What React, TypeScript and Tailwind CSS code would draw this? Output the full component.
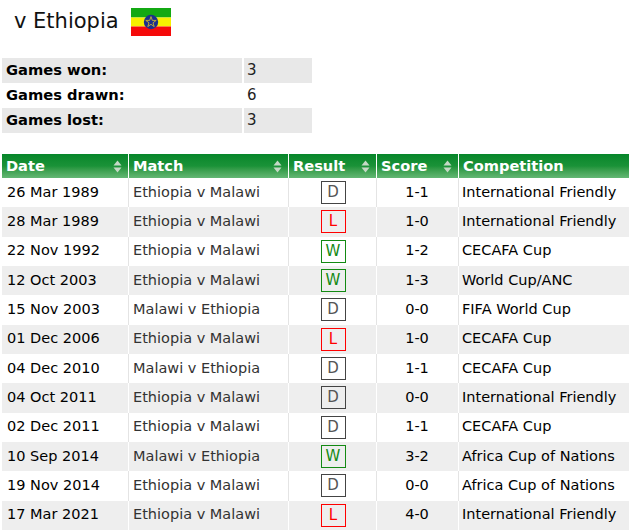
import React from "react";

type Row = { date: string; match: string; res: "W" | "D" | "L"; score: string; comp: string };

const rows: Row[] = [
  { date: "26 Mar 1989", match: "Ethiopia v Malawi", res: "D", score: "1-1", comp: "International Friendly" },
  { date: "28 Mar 1989", match: "Ethiopia v Malawi", res: "L", score: "1-0", comp: "International Friendly" },
  { date: "22 Nov 1992", match: "Ethiopia v Malawi", res: "W", score: "1-2", comp: "CECAFA Cup" },
  { date: "12 Oct 2003", match: "Ethiopia v Malawi", res: "W", score: "1-3", comp: "World Cup/ANC" },
  { date: "15 Nov 2003", match: "Malawi v Ethiopia", res: "D", score: "0-0", comp: "FIFA World Cup" },
  { date: "01 Dec 2006", match: "Ethiopia v Malawi", res: "L", score: "1-0", comp: "CECAFA Cup" },
  { date: "04 Dec 2010", match: "Malawi v Ethiopia", res: "D", score: "1-1", comp: "CECAFA Cup" },
  { date: "04 Oct 2011", match: "Ethiopia v Malawi", res: "D", score: "0-0", comp: "International Friendly" },
  { date: "02 Dec 2011", match: "Ethiopia v Malawi", res: "D", score: "1-1", comp: "CECAFA Cup" },
  { date: "10 Sep 2014", match: "Malawi v Ethiopia", res: "W", score: "3-2", comp: "Africa Cup of Nations" },
  { date: "19 Nov 2014", match: "Ethiopia v Malawi", res: "D", score: "0-0", comp: "Africa Cup of Nations" },
  { date: "17 Mar 2021", match: "Ethiopia v Malawi", res: "L", score: "4-0", comp: "International Friendly" },
];

function SortIcon() {
  return (
    <svg width="9" height="13" viewBox="0 0 9 13" className="shrink-0">
      <polygon points="4.5,0.5 8.5,5.5 0.5,5.5" fill="#c5d9c6" />
      <polygon points="0.5,7.5 8.5,7.5 4.5,12.5" fill="#c5d9c6" />
    </svg>
  );
}

function Flag() {
  return (
    <svg width="40" height="28" viewBox="0 0 40 28">
      <rect x="0" y="0" width="40" height="9.5" fill="#13a913" />
      <rect x="0" y="9.5" width="40" height="9" fill="#f6f000" />
      <rect x="0" y="18.5" width="40" height="9.5" fill="#f50a0a" />
      <circle cx="20" cy="14" r="7.2" fill="#1c2f8c" />
      <polygon
        points="20,8.6 21.3,12.4 25.2,12.4 22,14.8 23.2,18.6 20,16.3 16.8,18.6 18,14.8 14.8,12.4 18.7,12.4"
        fill="none"
        stroke="#c7b23a"
        strokeWidth="0.9"
      />
    </svg>
  );
}

function Badge({ r }: { r: "W" | "D" | "L" }) {
  const cls =
    r === "W"
      ? "border-[#138a13] text-[#138a13]"
      : r === "L"
      ? "border-[#ff0000] text-[#ff0000]"
      : "border-[#444444] text-[#555555]";
  return (
    <div className={`w-[25px] h-[23px] border flex items-center justify-center text-[15px] leading-none ${cls}`}>
      {r}
    </div>
  );
}

const cols = "grid grid-cols-[126px_159px_87px_81px_170px] gap-x-px";

export default function App() {
  return (
    <div
      className="w-[629px] h-[531px] overflow-hidden bg-white text-black"
      style={{ fontFamily: '"DejaVu Sans", Verdana, sans-serif' }}
    >
      <div className="flex items-center h-[48px] pl-[14px]">
        <span className="text-[21px] leading-none text-[#111] mt-[-6px]">v Ethiopia</span>
        <div className="ml-[12px] mt-[-4px]">
          <Flag />
        </div>
      </div>

      <div className="mt-[10px] ml-[2px] w-[310px] flex flex-col">
        {[
          ["Games won:", "3", "bg-[#e8e8e8]"],
          ["Games drawn:", "6", "bg-white"],
          ["Games lost:", "3", "bg-[#e8e8e8]"],
        ].map(([l, v, bg]) => (
          <div key={l} className="grid grid-cols-[240px_68px] gap-x-[2px] h-[25px]">
            <div className={`${bg} flex items-center pl-[4px] text-[14.7px] font-bold`}>{l}</div>
            <div className={`${bg} flex items-center pl-[3px] text-[15px] text-[#222]`}>{v}</div>
          </div>
        ))}
      </div>

      <div className="mt-[21px] w-[627px] ml-[2px]">
        <div className={`${cols} h-[24px] bg-white`}>
          {["Date", "Match", "Result", "Score", "Competition"].map((h, i) => (
            <div
              key={h}
              className="bg-gradient-to-b from-[#05862a] via-[#1a9238] to-[#63b774] flex items-center justify-between pl-[4px] pr-[6px] text-white font-bold text-[14.6px]"
            >
              <span>{h}</span>
              {i < 4 && <SortIcon />}
            </div>
          ))}
        </div>
        {rows.map((r, i) => {
          const odd = i % 2 === 1;
          const cell = odd ? "bg-[#eeeeee]" : "bg-white";
          return (
            <div key={i} className={`${cols} h-[29.33px] ${odd ? "bg-white" : "bg-[#e4e4e4]"}`}>
              <div className={`${cell} flex items-center pl-[5px] text-[14.5px] text-black`}>{r.date}</div>
              <div className={`${cell} flex items-center pl-[4px] text-[14.5px] text-[#333]`}>{r.match}</div>
              <div className={`${cell} flex items-center justify-center pl-[1px]`}>
                <Badge r={r.res} />
              </div>
              <div className={`${cell} flex items-center justify-center text-[14.5px] text-black pr-[1px]`}>{r.score}</div>
              <div className={`${cell} flex items-center pl-[3px] text-[14.5px] text-black`}>{r.comp}</div>
            </div>
          );
        })}
      </div>
    </div>
  );
}
